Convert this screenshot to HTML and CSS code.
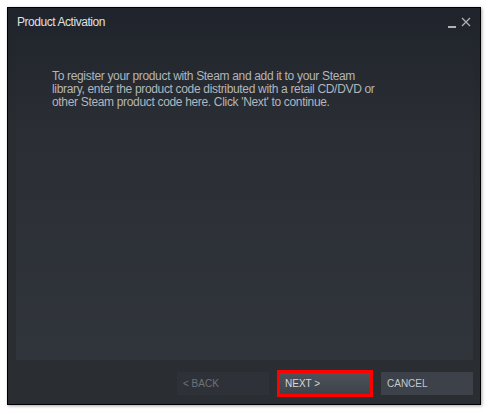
FILE: index.html
```html
<!DOCTYPE html>
<html>
<head>
<meta charset="utf-8">
<link rel="stylesheet" href="styles.css">
</head>
<body>
<div class="window">
  <div class="titlebar">
    <span class="title">Product Activation</span>
    <div class="controls">
      <span class="minimize"></span>
      <svg class="close" width="10" height="10" viewBox="0 0 10 10"><path d="M1 1 L9 9 M9 1 L1 9" stroke="#aeb1b5" stroke-width="1.3" fill="none"/></svg>
    </div>
  </div>
  <div class="panel">
    <p class="intro">To register your product with Steam and add it to your Steam<br>library, enter the product code distributed with a retail CD/DVD or<br>other Steam product code here. Click 'Next' to continue.</p>
  </div>
  <div class="footer">
    <button class="btn disabled">&lt; BACK</button>
    <button class="btn primary">NEXT &gt;</button>
    <button class="btn">CANCEL</button>
  </div>
</div>
</body>
</html>
```
FILE: styles.css
```css
html, body {
  margin: 0;
  padding: 0;
  background: #ffffff;
}
body {
  padding: 7px;
  font-family: "Liberation Sans", Arial, sans-serif;
}
.window {
  box-sizing: border-box;
  width: 474px;
  height: 398px;
  border: 1px solid #000;
  background: linear-gradient(to bottom, #1f232b 0%, #292c31 30%, #2a2d32 100%);
  box-shadow: 1px 1px 3px rgba(0,0,0,0.35);
  display: flex;
  flex-direction: column;
  padding: 0 7px 9px 8px;
}
.titlebar {
  height: 30px;
  display: flex;
  align-items: center;
  justify-content: space-between;
  flex: none;
}
.title {
  color: #dfe1e3;
  font-size: 12px;
  letter-spacing: -0.45px;
  margin-left: 1px;
  margin-top: -2px;
}
.controls {
  display: flex;
  align-items: center;
  gap: 5px;
  margin-right: 2px;
  margin-top: -2px;
}
.minimize {
  display: block;
  width: 8px;
  height: 2px;
  background: #aeb1b5;
  margin-top: 9px;
}
.close {
  display: block;
}
.panel {
  flex: 1;
  background: linear-gradient(to bottom, #22262d 0%, #2b2e35 30%, #30343b 100%);
}
.intro {
  margin: 32px 0 0 36px;
  color: #b3b6ba;
  font-size: 12px;
  letter-spacing: -0.33px;
  line-height: 13px;
}
.footer {
  flex: none;
  display: flex;
  justify-content: flex-end;
  gap: 10px;
  padding-top: 12px;
}
.btn {
  width: 92px;
  height: 23px;
  border: none;
  padding: 0 0 0 6px;
  text-align: left;
  font-family: "Liberation Sans", Arial, sans-serif;
  font-size: 10px;
  color: #c5c8cc;
  background: #3d414a;
}
.btn.disabled {
  background: #2e3137;
  color: #6f7378;
}
.btn.primary {
  background: linear-gradient(to bottom, #4d525b, #3e424a);
  color: #d6d8db;
  outline: 3px solid #ff0000;
  outline-offset: -1px;
}
```
